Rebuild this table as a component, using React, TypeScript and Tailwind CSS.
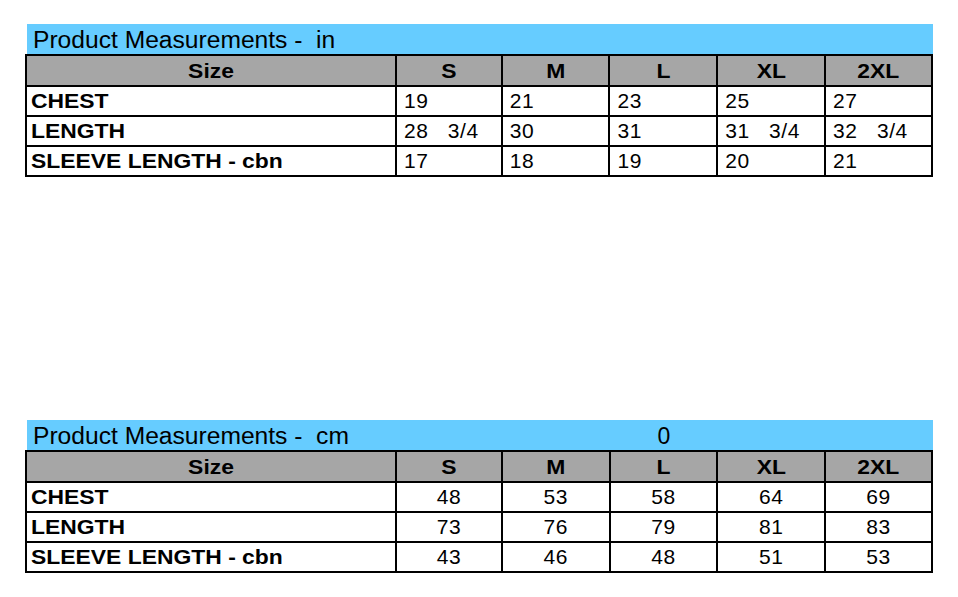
const sizes = ['S', 'M', 'L', 'XL', '2XL'];

const inches = [
  { label: 'CHEST', values: ['19', '21', '23', '25', '27'] },
  { label: 'LENGTH', values: ['28   3/4', '30', '31', '31   3/4', '32   3/4'] },
  { label: 'SLEEVE LENGTH - cbn', values: ['17', '18', '19', '20', '21'] },
];

const cms = [
  { label: 'CHEST', values: ['48', '53', '58', '64', '69'] },
  { label: 'LENGTH', values: ['73', '76', '79', '81', '83'] },
  { label: 'SLEEVE LENGTH - cbn', values: ['43', '46', '48', '51', '53'] },
];

type Row = { label: string; values: string[] };

const colWidths = ['w-[371px]', 'w-[106px]', 'w-[108px]', 'w-[108px]', 'w-[108px]', 'w-[107px]'];

const MeasureTable = ({
  title,
  rows,
  centered,
  extra,
}: {
  title: string;
  rows: Row[];
  centered?: boolean;
  extra?: string;
}) => (
  <div className="w-[908px]">
    {/* Title bar */}
    <div className="ml-[2px] flex h-[30px] items-end bg-[#66ccff] text-[23px] leading-[28px] text-black">
      <div className="w-[369px] shrink-0 whitespace-pre pl-[6px]">
        <span className="inline-block origin-left scale-x-[1.07]">{title}</span>
      </div>
      <div className="w-[214px] shrink-0" />
      <div className="w-[108px] shrink-0 text-center">{extra}</div>
    </div>

    <table className="table-fixed border-collapse border-2 border-black text-[21px] leading-[24px] text-black">
      <colgroup>
        {colWidths.map((w, i) => (
          <col key={i} className={w} />
        ))}
      </colgroup>
      <thead>
        <tr className="h-[31px] bg-[#a6a6a6]">
          <th className="border-2 border-black text-center font-bold">
            <span className="inline-block scale-x-[1.09]">Size</span>
          </th>
          {sizes.map((s) => (
            <th key={s} className="border-2 border-black text-center font-bold">
              <span className="inline-block scale-x-[1.09]">{s}</span>
            </th>
          ))}
        </tr>
      </thead>
      <tbody>
        {rows.map((r) => (
          <tr key={r.label} className="h-[30px] bg-white">
            <td className="border-2 border-black pl-[4px] font-bold">
              <span className="inline-block origin-left scale-x-[1.09]">{r.label}</span>
            </td>
            {r.values.map((v, i) => (
              <td
                key={i}
                className={`border-2 border-black whitespace-pre tracking-[0.6px] ${centered ? 'text-center' : 'pl-[7px]'}`}
              >
                {v}
              </td>
            ))}
          </tr>
        ))}
      </tbody>
    </table>
  </div>
);

export default function App() {
  return (
    <div className="min-h-screen bg-white pl-[25px] pt-[24px] font-['Liberation_Sans',Arial,sans-serif]">
      <MeasureTable title="Product Measurements -  in" rows={inches} />
      <div className="h-[243px]" />
      <MeasureTable title="Product Measurements -  cm" rows={cms} centered extra="0" />
    </div>
  );
}
